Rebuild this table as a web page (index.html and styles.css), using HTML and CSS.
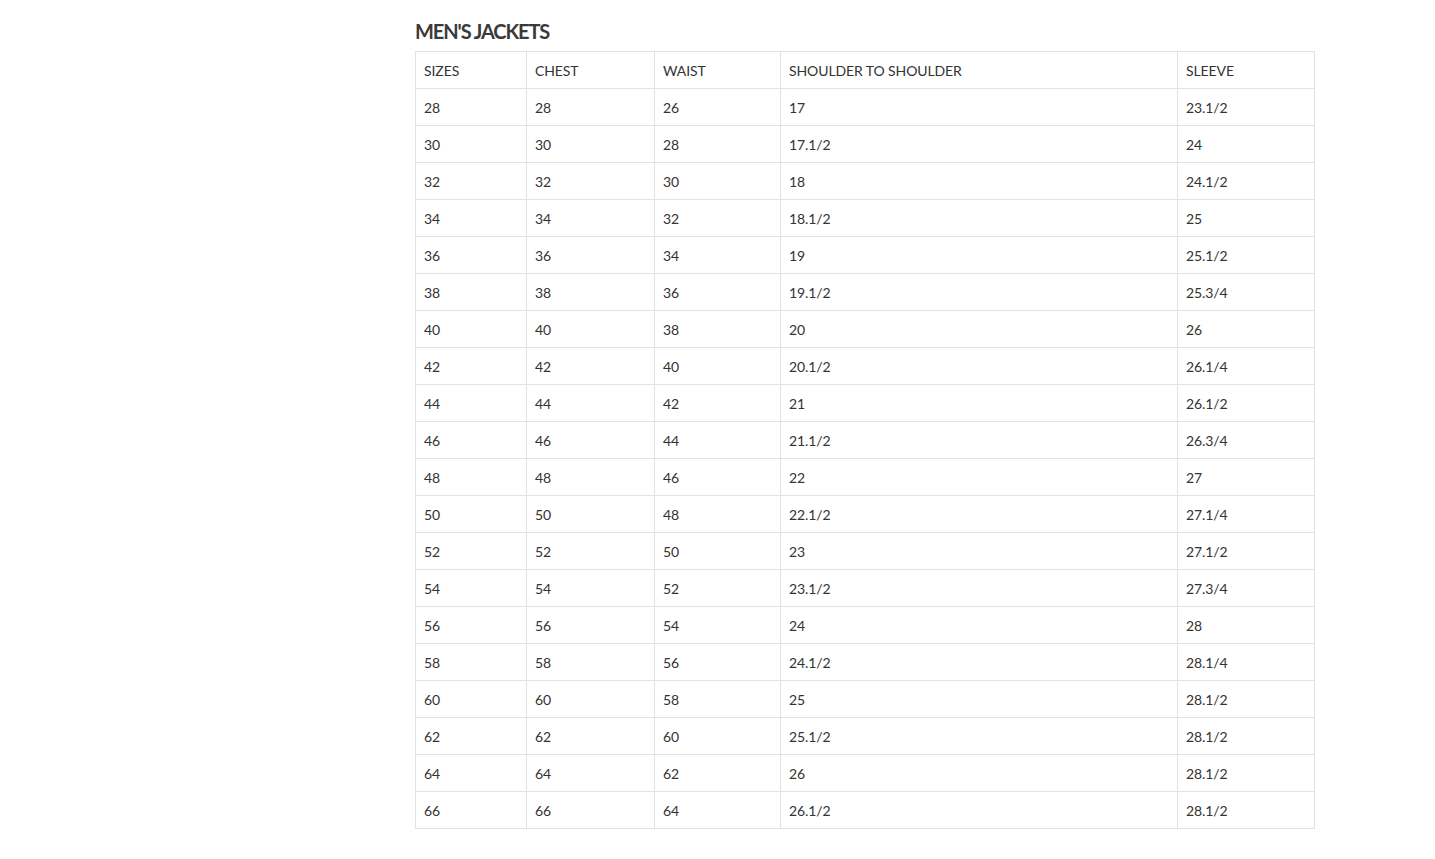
FILE: index.html
```html
<!DOCTYPE html>
<html>
<head>
<meta charset="utf-8">
<link rel="stylesheet" href="styles.css">
</head>
<body>
<div class="wrap">
  <h2 class="title">MEN'S JACKETS</h2>
  <table class="chart">
    <colgroup>
      <col class="c1"><col class="c2"><col class="c3"><col class="c4"><col class="c5">
    </colgroup>
    <tbody>
      <tr><td>SIZES</td><td>CHEST</td><td>WAIST</td><td>SHOULDER TO SHOULDER</td><td>SLEEVE</td></tr>
      <tr><td>28</td><td>28</td><td>26</td><td>17</td><td>23.1/2</td></tr>
      <tr><td>30</td><td>30</td><td>28</td><td>17.1/2</td><td>24</td></tr>
      <tr><td>32</td><td>32</td><td>30</td><td>18</td><td>24.1/2</td></tr>
      <tr><td>34</td><td>34</td><td>32</td><td>18.1/2</td><td>25</td></tr>
      <tr><td>36</td><td>36</td><td>34</td><td>19</td><td>25.1/2</td></tr>
      <tr><td>38</td><td>38</td><td>36</td><td>19.1/2</td><td>25.3/4</td></tr>
      <tr><td>40</td><td>40</td><td>38</td><td>20</td><td>26</td></tr>
      <tr><td>42</td><td>42</td><td>40</td><td>20.1/2</td><td>26.1/4</td></tr>
      <tr><td>44</td><td>44</td><td>42</td><td>21</td><td>26.1/2</td></tr>
      <tr><td>46</td><td>46</td><td>44</td><td>21.1/2</td><td>26.3/4</td></tr>
      <tr><td>48</td><td>48</td><td>46</td><td>22</td><td>27</td></tr>
      <tr><td>50</td><td>50</td><td>48</td><td>22.1/2</td><td>27.1/4</td></tr>
      <tr><td>52</td><td>52</td><td>50</td><td>23</td><td>27.1/2</td></tr>
      <tr><td>54</td><td>54</td><td>52</td><td>23.1/2</td><td>27.3/4</td></tr>
      <tr><td>56</td><td>56</td><td>54</td><td>24</td><td>28</td></tr>
      <tr><td>58</td><td>58</td><td>56</td><td>24.1/2</td><td>28.1/4</td></tr>
      <tr><td>60</td><td>60</td><td>58</td><td>25</td><td>28.1/2</td></tr>
      <tr><td>62</td><td>62</td><td>60</td><td>25.1/2</td><td>28.1/2</td></tr>
      <tr><td>64</td><td>64</td><td>62</td><td>26</td><td>28.1/2</td></tr>
      <tr><td>66</td><td>66</td><td>64</td><td>26.1/2</td><td>28.1/2</td></tr>
    </tbody>
  </table>
</div>
</body>
</html>
```

FILE: styles.css
```css
html, body {
  margin: 0;
  padding: 0;
  background: #fff;
}
body {
  font-family: Lato, "Open Sans", "Liberation Sans", sans-serif;
  color: #333;
}
.wrap {
  margin-left: 415px;
  padding-top: 19px;
  width: 899px;
}
.title {
  margin: 0;
  font-size: 20px;
  line-height: 24px;
  font-weight: 700;
  color: #3a3a3a;
  letter-spacing: -1.1px;
  height: 32px;
}
.chart {
  border-collapse: collapse;
  table-layout: fixed;
  width: 899px;
  font-size: 14px;
  letter-spacing: -0.1px;
  color: #333;
}
.chart td {
  border: 1px solid #e2e2e2;
  height: 37px;
  padding: 2px 8px 0;
  line-height: 20px;
  box-sizing: border-box;
  vertical-align: middle;
}
.c1 { width: 111px; }
.c2 { width: 128px; }
.c3 { width: 126px; }
.c4 { width: 397px; }
.c5 { width: 137px; }
```
